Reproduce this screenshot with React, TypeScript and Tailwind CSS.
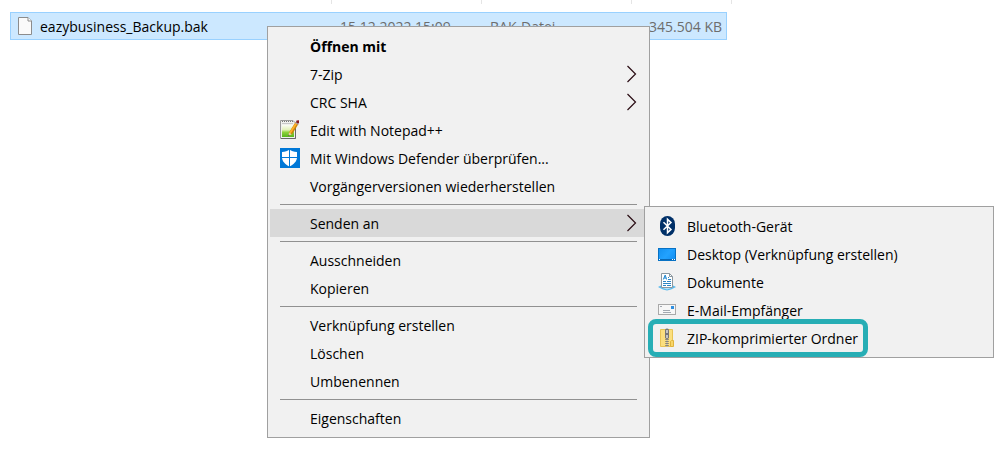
import type { ReactNode } from 'react';
import clsx from 'clsx';

interface Entry {
  label: string;
  icon?: ReactNode;
  bold?: boolean;
  active?: boolean;
  marked?: boolean;
  submenu?: Entry[];
  hasArrow?: boolean;
}

function FileIcon() {
  return (
    <svg className="w-4 h-5 shrink-0" viewBox="0 0 16 20">
      <path d="M1.5 1.5H11L14.5 5V18.5H1.5Z" fill="#fafafa" stroke="#8c8c8c" />
      <path d="M11 1.5V5H14.5" fill="#fff" stroke="#8c8c8c" />
    </svg>
  );
}

function NotepadIcon() {
  return (
    <svg className="w-5 h-5" viewBox="0 0 20 20">
      <defs>
        <linearGradient id="note" x1="0" y1="0" x2="0" y2="1">
          <stop offset="0" stopColor="#fafcf4" />
          <stop offset="0.4" stopColor="#e2f0b8" />
          <stop offset="0.6" stopColor="#8ed33c" />
          <stop offset="1" stopColor="#58b51c" />
        </linearGradient>
      </defs>
      <path d="M0.5 0.5H13L15.5 3V18.5H0.5Z" fill="#f0f0ee" stroke="#9a9a9a" />
      <path d="M2 1.5H13" stroke="#777" strokeDasharray="1 1" />
      <path d="M2 3.5H13" stroke="#c8c8c8" />
      <rect x="2" y="5" width="12" height="12" fill="url(#note)" />
      <path d="M15.5 6V18.5H1" fill="none" stroke="#686868" />
      <path d="M17 3L10.5 13.5" stroke="#c98309" strokeWidth="3.4" />
      <path d="M16.4 3.2L10 13" stroke="#ffb02a" strokeWidth="1.8" />
      <path d="M9 12.5L11.8 14.2L8.4 16.2Z" fill="#e8cfa0" />
      <path d="M8.4 16.2L9.8 15.3L8.6 14.7Z" fill="#333" />
      <path d="M15.5 2.4L18.5 4.2" stroke="#aab" strokeWidth="1.4" />
      <path d="M16.5 0.5L19 0.3V3L17.8 3.4L16 2.2Z" fill="#8c1a20" />
    </svg>
  );
}

function DefenderIcon() {
  return (
    <svg className="w-5 h-5" viewBox="0 0 20 20">
      <rect width="20" height="20" fill="#0078d7" />
      <path d="M9.5 1.5C7.8 3 5 3.9 2 4V9.2C2 13.2 5.2 16.4 9.5 18.4C13.8 16.4 17 13.2 17 9.2V4C14 3.9 11.2 3 9.5 1.5Z" fill="#fff" />
      <path d="M9.5 1V19M1 9.5H18" stroke="#0078d7" />
    </svg>
  );
}

function BluetoothIcon() {
  return (
    <svg className="w-5 h-5" viewBox="0 0 20 20">
      <rect x="3" width="15" height="20" rx="7.5" ry="8" fill="#003068" />
      <path d="M6.5 6.2L14 13.4L10.5 16.8V3.2L14 6.6L6.5 13.8" fill="none" stroke="#fff" strokeWidth="1.5" />
    </svg>
  );
}

function DesktopIcon() {
  return (
    <svg className="w-5 h-5" viewBox="0 0 20 20">
      <defs>
        <linearGradient id="desk" x1="0" y1="0" x2="1" y2="0.6">
          <stop offset="0" stopColor="#1390f0" />
          <stop offset="0.6" stopColor="#22a2ff" />
          <stop offset="1" stopColor="#1693f5" />
        </linearGradient>
      </defs>
      <rect x="1.5" y="4.5" width="17" height="12" fill="url(#desk)" stroke="#0872c4" />
      <path d="M1 15.5H19" stroke="#0a68b4" />
      <path d="M2 15.5H3M15 15.5H16M17 15.5H18" stroke="#fff" />
    </svg>
  );
}

function DocumentsIcon() {
  return (
    <svg className="w-5 h-5" viewBox="0 0 20 20">
      <path d="M1 15L4 13.5H16L19 15L14 17.5L10 18.5L6 17.5Z" fill="#55b8ec" />
      <path d="M4 15.5H16L10 17.5Z" fill="#b6e2f8" />
      <path d="M4.5 1.5H12.5L15.5 4.5V15.5H4.5Z" fill="#fff" stroke="#8b979f" />
      <path d="M12.5 1.5V4.5H15.5" fill="none" stroke="#8b979f" />
      <path d="M6.3 7.5L8.2 3L9.6 7.5M7 6H9.2" fill="none" stroke="#1f86cf" />
      <path d="M11 5.5H12M11 7.5H14M6 9.5H9M10 9.5H14M6 11.5H14M6 13.5H9M10 13.5H14" stroke="#2d86c4" />
    </svg>
  );
}

function MailIcon() {
  return (
    <svg className="w-5 h-5" viewBox="0 0 20 20">
      <rect x="1.5" y="4.5" width="17" height="10" fill="#f7f7f7" stroke="#a9a9a9" />
      <rect x="14" y="6" width="3" height="3" fill="#2f8fe0" />
      <path d="M3 6.5H5M6 10.5H13M6 12.5H14" stroke="#a2a8b0" />
    </svg>
  );
}

function ZipIcon() {
  return (
    <svg className="w-5 h-5" viewBox="0 0 20 20">
      <path d="M3.5 1.5H15.5V18.5H3.5Z" fill="#fbdf7e" stroke="#e8c455" />
      <path d="M14.5 12.5H16.5V18.5H13.5V13.5Z" fill="#f8d568" stroke="#e0b43c" />
      <path d="M10 11V19" stroke="#555" strokeWidth="3" strokeDasharray="1 1" />
      <path d="M10 11V19" stroke="#b5b5b5" />
      <rect x="8" y="0.5" width="4" height="10.5" rx="1.8" fill="#777" />
      <path d="M10 2V5M10 7V10" stroke="#e6e6e6" strokeWidth="1.4" />
    </svg>
  );
}

function Arrow() {
  return (
    <svg className="w-[10px] h-[18px]" viewBox="0 0 10 18" fill="none">
      <path d="M0.5 1L8.5 9L0.5 17" stroke="#2a0c14" strokeWidth="1.2" />
    </svg>
  );
}

const sendTo: Entry[] = [
  { label: 'Bluetooth-Gerät', icon: <BluetoothIcon /> },
  { label: 'Desktop (Verknüpfung erstellen)', icon: <DesktopIcon /> },
  { label: 'Dokumente', icon: <DocumentsIcon /> },
  { label: 'E-Mail-Empfänger', icon: <MailIcon /> },
  { label: 'ZIP-komprimierter Ordner', icon: <ZipIcon />, marked: true },
];

// every group is followed by a separator, except the last
const groups: Entry[][] = [
  [
    { label: 'Öffnen mit', bold: true },
    { label: '7-Zip', hasArrow: true },
    { label: 'CRC SHA', hasArrow: true },
    { label: 'Edit with Notepad++', icon: <NotepadIcon /> },
    { label: 'Mit Windows Defender überprüfen...', icon: <DefenderIcon /> },
    { label: 'Vorgängerversionen wiederherstellen' },
  ],
  [{ label: 'Senden an', hasArrow: true, active: true, submenu: sendTo }],
  [{ label: 'Ausschneiden' }, { label: 'Kopieren' }],
  [{ label: 'Verknüpfung erstellen' }, { label: 'Löschen' }, { label: 'Umbenennen' }],
  [{ label: 'Eigenschaften' }],
];

function MenuItem({ entry }: { entry: Entry }) {
  return (
    <li role="none" className="relative">
      <button
        role="menuitem"
        aria-haspopup={entry.hasArrow ? 'menu' : undefined}
        className={clsx(
          'flex items-center w-full h-7 gap-[10px] px-[10px] text-left whitespace-nowrap',
          entry.active && 'bg-[#d9d9d9]',
          entry.bold && 'font-bold',
        )}
      >
        <span className="w-5 h-5 shrink-0">{entry.icon}</span>
        <span className="flex-1 pt-[2px]">{entry.label}</span>
        {entry.hasArrow && <Arrow />}
      </button>
      {entry.marked && (
        <div className="absolute -inset-y-[5px] left-px w-[220px] border-[5px] border-[#27aeb5] rounded-lg pointer-events-none" />
      )}
      {entry.submenu && (
        <ul role="menu" className="absolute -top-[3px] left-full -ml-[3px] w-[350px] px-[2px] py-[5px] bg-[#f1f1f1] border border-[#a0a0a0]">
          {entry.submenu.map(sub => (
            <MenuItem key={sub.label} entry={sub} />
          ))}
        </ul>
      )}
    </li>
  );
}

function ContextMenu() {
  return (
    <div role="menu" className="absolute left-[267px] top-[26px] w-[383px] px-[2px] py-[5px] bg-[#f1f1f1] border border-[#a0a0a0]">
      {groups.map((group, i) => (
        <div key={i}>
          {i > 0 && <hr className="mx-[10px] my-1 border-[#919191]" />}
          <ul>
            {group.map(entry => (
              <MenuItem key={entry.label} entry={entry} />
            ))}
          </ul>
        </div>
      ))}
    </div>
  );
}

function FileList() {
  const cell = 'h-7 p-0 border-y border-[#99d1ff] bg-[#cce8ff] text-[#6d6d6d]';
  return (
    <table className="ml-[10px] table-fixed w-[722px] border-separate border-spacing-0">
      <colgroup>
        <col className="w-[322px]" />
        <col className="w-[150px]" />
        <col className="w-[150px]" />
        <col className="w-[95px]" />
        <col className="w-[5px]" />
      </colgroup>
      <thead>
        <tr>
          {['name', 'date', 'type'].map(col => (
            <th key={col} className="p-0 pb-2">
              <div className="h-1 border-r border-[#e5e5e5]" />
            </th>
          ))}
          <th colSpan={2} className="p-0 pb-2">
            <div className="h-1 border-r border-[#e5e5e5]" />
          </th>
        </tr>
      </thead>
      <tbody>
        <tr>
          <td className={clsx(cell, 'border-l')}>
            <div className="flex items-center gap-[7px] pl-[6px] text-black">
              <FileIcon />
              <span className="pt-[2px]">eazybusiness_Backup.bak</span>
            </div>
          </td>
          <td className={clsx(cell, 'pl-2 pt-[2px]')}>15.12.2022 15:09</td>
          <td className={clsx(cell, 'pl-2 pt-[2px]')}>BAK-Datei</td>
          <td className={clsx(cell, 'border-r pr-1 pt-[2px] text-right')}>345.504 KB</td>
          <td />
        </tr>
      </tbody>
    </table>
  );
}

export default function App() {
  return (
    <main className="relative min-h-screen overflow-hidden bg-white text-black text-[14px] leading-5 font-['Open_Sans','Noto_Sans',sans-serif]">
      <FileList />
      <ContextMenu />
    </main>
  );
}
